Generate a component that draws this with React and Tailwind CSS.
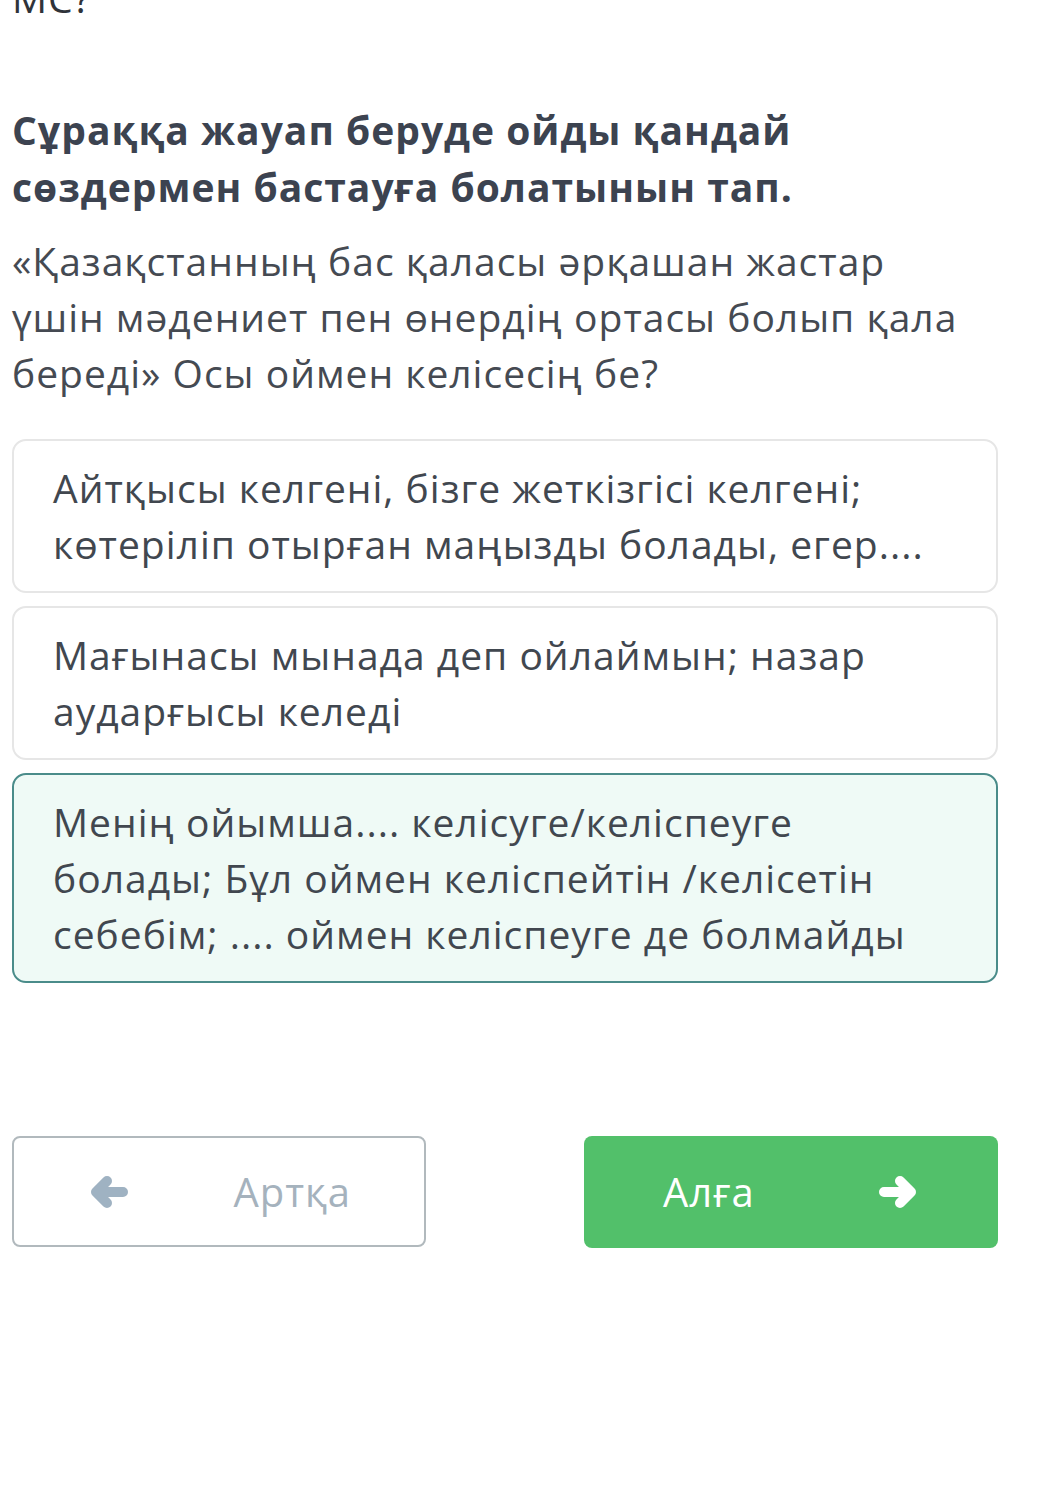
import React from 'react';

const options = [
  { id: 1, text: 'Айтқысы келгені, бізге жеткізгісі келгені; көтеріліп отырған маңызды болады, егер....' },
  { id: 2, text: 'Мағынасы мынада деп ойлаймын; назар аударғысы келеді' },
  {
    id: 3,
    text: 'Менің ойымша.... келісуге/келіспеуге болады; Бұл оймен келіспейтін /келісетін себебім; .... оймен келіспеуге де болмайды',
    selected: true,
  },
];

function Arrow({ dir, className }) {
  const d = dir === 'left' ? 'M35 17 H8 M19 6 L8 17 L19 28' : 'M5 17 H32 M21 6 L32 17 L21 28';
  return (
    <svg viewBox="0 0 40 34" className={className} fill="none" stroke="currentColor" strokeWidth="10" strokeLinecap="round" strokeLinejoin="round">
      <path d={d} />
    </svg>
  );
}

function Option({ text, selected }) {
  return (
    <div
      className={
        selected
          ? 'rounded-[14px] border-2 border-[#4a8c8a] bg-[#effaf6] px-[39px] py-[19px]'
          : 'rounded-[14px] border-2 border-[#e6e6e6] bg-white px-[39px] py-[19px]'
      }
    >
      <p className="text-[39px] leading-[56px] tracking-[1px] text-[#41474f]">{text}</p>
    </div>
  );
}

export default function App() {
  return (
    <div className="min-h-[1508px] bg-white font-['Open_Sans',sans-serif] overflow-hidden">
      <div className="ml-[12px] w-[986px]">
        <p className="-mt-[30px] text-[39px] leading-[56px] tracking-[1px] text-[#2f3339]">МС?</p>

        <h2 className="mt-[75px] text-[39px] font-bold leading-[57px] tracking-[1px] text-[#3c4350]">
          Сұраққа жауап беруде ойды қандай сөздермен бастауға болатынын тап.
        </h2>

        <p className="mt-[18px] w-[966px] text-[39px] leading-[56px] tracking-[1px] text-[#454a52]">
          «Қазақстанның бас қаласы әрқашан жастар үшін мәдениет пен өнердің ортасы болып қала береді» Осы оймен келісесің бе?
        </p>

        <div className="mt-[38px] flex flex-col gap-[13px]">
          {options.map((o) => (
            <Option key={o.id} text={o.text} selected={o.selected} />
          ))}
        </div>

        <div className="mt-[153px] flex justify-between">
          <button className="flex h-[111px] w-[414px] items-center justify-between rounded-[8px] border-2 border-[#b1b9bd] bg-white pl-[74px] pr-[73px]">
            <Arrow dir="left" className="h-[34px] w-[40px] text-[#9fb2c2]" />
            <span className="text-[40px] tracking-[1px] text-[#a5b2bd]">Артқа</span>
          </button>
          <button className="flex h-[112px] w-[414px] items-center justify-between rounded-[8px] bg-[#52c06a] pl-[79px] pr-[79px]">
            <span className="text-[40px] tracking-[1px] text-white">Алға</span>
            <Arrow dir="right" className="h-[34px] w-[40px] text-white" />
          </button>
        </div>
      </div>
    </div>
  );
}
